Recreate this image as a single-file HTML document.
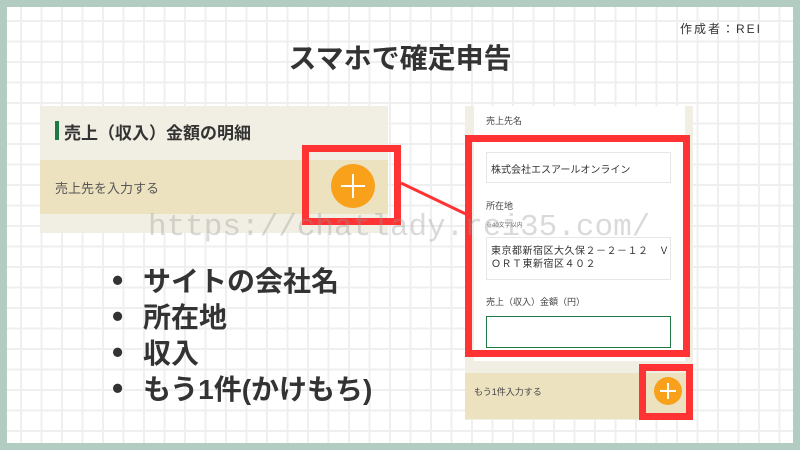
<!DOCTYPE html>
<html><head><meta charset="utf-8"><style>
*{margin:0;padding:0;box-sizing:border-box}
body{width:800px;height:450px;background:#b3ccc1;position:relative;overflow:hidden;font-family:"Liberation Sans","Noto Sans CJK JP",sans-serif;color:#333}
#bg{position:absolute;left:7px;top:7px;width:786px;height:436px;background-color:#fff;
background-image:linear-gradient(to right,#efefef 2px,transparent 2px),linear-gradient(to bottom,#efefef 2px,transparent 2px);
background-size:20.5px 20.5px;background-position:13px 13px}
.a{position:absolute}
.t{white-space:nowrap}
</style></head><body>
<div id="bg"></div>
<div class="a t" style="left:680px;top:20px;font-size:12px;letter-spacing:2px;color:#333">作成者：REI</div>
<div class="a t" style="left:0;width:800px;text-align:center;top:37px;font-size:28px;font-weight:bold;color:#333">スマホで確定申告</div>

<!-- left panel -->
<div class="a" style="left:40px;top:106px;width:348px;height:127px;background:#f1efe3"></div>
<div class="a" style="left:55px;top:121px;width:4px;height:19px;background:#1d7a45"></div>
<div class="a t" style="left:64px;top:119px;font-size:17px;font-weight:bold;color:#333">売上（収入）金額の明細</div>
<div class="a" style="left:40px;top:160px;width:348px;height:54px;background:#ece2bf"></div>
<div class="a t" style="left:55px;top:178px;font-size:13px;color:#555">売上先を入力する</div>
<div class="a" style="left:302px;top:145px;width:99px;height:80px;border:7px solid #ff3333"></div>
<div class="a" style="left:331px;top:164px;width:44px;height:44px;border-radius:50%;background:#f9a11b"></div>
<div class="a" style="left:352px;top:174px;width:2px;height:24px;background:#fff"></div>
<div class="a" style="left:341px;top:185px;width:24px;height:2px;background:#fff"></div>
<svg class="a" style="left:0;top:0" width="800" height="450"><line x1="401" y1="183" x2="470" y2="216" stroke="#ff3333" stroke-width="3"/></svg>

<!-- right panel -->
<div class="a" style="left:465px;top:106px;width:228px;height:314px;background:#f1efe3"></div>
<div class="a" style="left:474px;top:106px;width:211px;height:255px;background:#fff"></div>
<div class="a t" style="left:486px;top:114px;font-size:9px;color:#444">売上先名</div>
<div class="a" style="left:486px;top:152px;width:185px;height:31px;border:1px solid #e6e6e6"></div>
<div class="a t" style="left:491px;top:161px;font-size:10px;color:#333">株式会社エスアールオンライン</div>
<div class="a t" style="left:486px;top:199px;font-size:9px;color:#444">所在地</div>
<div class="a t" style="left:486px;top:220px;font-size:6px;color:#666">※40文字以内</div>
<div class="a" style="left:486px;top:237px;width:185px;height:43px;border:1px solid #e6e6e6"></div>
<div class="a" style="left:491px;top:245px;font-size:10px;line-height:13px;color:#333;width:180px;letter-spacing:0.5px">東京都新宿区大久保２－２－１２　Ｖ<br>ＯＲＴ東新宿区４０２</div>
<div class="a t" style="left:486px;top:295px;font-size:9px;color:#444">売上（収入）金額（円）</div>
<div class="a" style="left:486px;top:316px;width:185px;height:32px;border:1px solid #1d7a45"></div>
<div class="a" style="left:465px;top:135px;width:225px;height:222px;border:7px solid #ff3333"></div>
<div class="a" style="left:465px;top:373px;width:228px;height:46px;background:#ece2bf"></div>
<div class="a t" style="left:474px;top:385px;font-size:9px;color:#444">もう1件入力する</div>
<div class="a" style="left:639px;top:364px;width:54px;height:56px;border:7px solid #ff3333"></div>
<div class="a" style="left:654px;top:377px;width:28px;height:28px;border-radius:50%;background:#f9a11b"></div>
<div class="a" style="left:667px;top:383px;width:2px;height:16px;background:#fff"></div>
<div class="a" style="left:660px;top:390px;width:16px;height:2px;background:#fff"></div>

<!-- watermark -->
<div class="a t" style="left:148px;top:210px;font-family:'Liberation Mono',monospace;font-size:31px;color:rgba(150,150,150,0.35)">https://chatlady.rei35.com/</div>

<!-- bullets -->
<div class="a" style="left:112px;top:263px;font-size:28px;font-weight:bold;line-height:34px;color:#333">
<div><span style="display:inline-block;width:31px;font-size:32px">•</span>サイトの会社名</div>
<div><span style="display:inline-block;width:31px;font-size:32px">•</span>所在地</div>
<div><span style="display:inline-block;width:31px;font-size:32px">•</span>収入</div>
<div><span style="display:inline-block;width:31px;font-size:32px">•</span>もう1件(かけもち)</div>
</div>
</body></html>
